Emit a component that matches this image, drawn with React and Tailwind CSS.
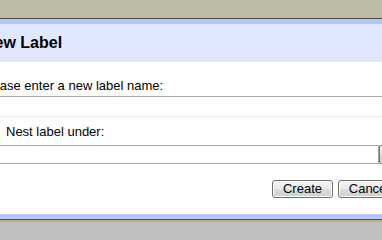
import React from "react";

// "New Label" dialog, cropped the way the screenshot shows it
export default function App() {
  return (
    <div className="w-[382px] h-[240px] overflow-hidden bg-[#c0c0c0] font-['Liberation_Sans',Arial,sans-serif] text-black">
      {/* page behind the dialog */}
      <div className="h-[18px] bg-[#bdbaa8]"></div>

      <div className="-ml-[29px] w-[440px]">
        <div className="h-px bg-[#4f4f55]"></div>
        <div className="h-[5px] bg-[#b4c7f8]"></div>

        {/* title bar */}
        <div className="h-[38px] bg-[#e0e8ff] pl-[12px] pt-[9px]">
          <h2 className="text-[16px] leading-[19px] font-bold">New Label</h2>
        </div>

        {/* body */}
        <div className="bg-white pl-[16px] pt-[16px] pb-[16px]">
          <div className="text-[13px] leading-[15px] -ml-[6px]">Please enter a new label name:</div>
          <input
            type="text"
            readOnly
            className="mt-[3px] block w-full h-[21px] border border-t-[#abadb3] border-x-[#e2e3ea] border-b-[#e3e9ef] bg-white outline-none"
          />

          <div className="mt-[7px] flex items-center h-[15px]">
            <input type="checkbox" className="w-[13px] h-[13px] m-0" />
            <span className="ml-[6px] text-[13px] leading-[15px]">Nest label under:</span>
          </div>

          <div className="mt-[6px] flex items-stretch h-[19px] w-[412px]">
            <div className="flex-1 border border-[#a5a5a5] bg-white"></div>
            <div className="w-[20px] border border-[#707070] rounded-[2px] bg-[linear-gradient(#f2f2f2,#ebebeb_50%,#dddddd_50%,#cfcfcf)]"></div>
          </div>

          <div className="mt-[16px] flex justify-end gap-[5px] pr-[11px]">
            <button className="w-[61px] h-[18px] border border-[#707070] rounded-[3px] bg-[linear-gradient(#f2f2f2,#ebebeb_50%,#dddddd_50%,#cfcfcf)] shadow-[inset_0_0_0_1px_#fcfcfc] text-[13px] leading-[15px] pb-px">
              Create
            </button>
            <button className="w-[62px] h-[18px] border border-[#707070] rounded-[3px] bg-[linear-gradient(#f2f2f2,#ebebeb_50%,#dddddd_50%,#cfcfcf)] shadow-[inset_0_0_0_1px_#fcfcfc] text-[13px] leading-[15px] pb-px">
              Cancel
            </button>
          </div>
        </div>

        <div className="h-[5px] bg-[#b4c7f8]"></div>
        <div className="h-px bg-[#4f4f55]"></div>
      </div>
      <div className="h-[2px] bg-[#c4ad7e]"></div>
    </div>
  );
}
